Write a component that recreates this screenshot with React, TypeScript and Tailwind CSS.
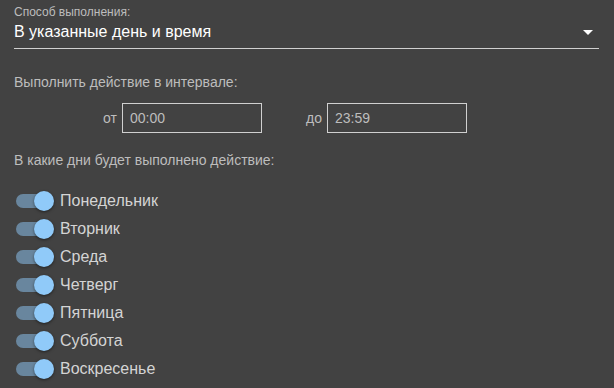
const days = ['Понедельник', 'Вторник', 'Среда', 'Четверг', 'Пятница', 'Суббота', 'Воскресенье'];

function Toggle() {
  return (
    <span className="relative flex h-5 w-[40px] shrink-0 items-center">
      <span className="ml-[2px] h-[14px] w-[34px] rounded-full bg-[#90caf9]/50" />
      <span className="absolute left-[20px] top-0 h-5 w-5 rounded-full bg-[#90caf9] shadow-[0_1px_3px_rgba(0,0,0,0.5)]" />
    </span>
  );
}

export default function App() {
  return (
    <main className="min-h-[388px] w-[614px] bg-[#424242] px-[14px] pt-[5px] font-['Liberation_Sans',Arial,sans-serif] text-[#e0e0e0]">
      <div className="flex w-[585px] flex-col">
        <p className="text-[12px] leading-[14px] text-[#bdbdbd]">Способ выполнения:</p>
        <div className="flex items-center justify-between border-b border-[#d0d0d0] pb-[6px] pt-[3px]">
          <span className="text-[16px] leading-[20px] text-white">В указанные день и время</span>
          <svg width="10" height="5" viewBox="0 0 10 5" className="mr-[6px]">
            <path d="M0 0h10L5 5z" fill="#ffffff" />
          </svg>
        </div>
      </div>

      <p className="mt-[25px] text-[14px] leading-[16px] text-[#bdbdbd]">Выполнить действие в интервале:</p>

      <div className="mt-[13px] flex items-center">
        <span className="ml-[89px] w-[19px] text-[14px] text-[#bdbdbd]">от</span>
        <div className="flex h-[30px] w-[140px] items-center border border-[#d0d0d0] px-[7px] text-[14px] text-[#bdbdbd]">00:00</div>
        <span className="ml-[44px] w-[21px] text-[14px] text-[#bdbdbd]">до</span>
        <div className="flex h-[30px] w-[140px] items-center border border-[#d0d0d0] px-[7px] text-[14px] text-[#bdbdbd]">23:59</div>
      </div>

      <p className="mt-[19px] text-[14px] leading-[16px] text-[#bdbdbd]">В какие дни будет выполнено действие:</p>

      <div className="mt-[23px] flex flex-col gap-[8px]">
        {days.map(d => (
          <label key={d} className="flex h-5 items-center gap-[6px]">
            <Toggle />
            <span className="text-[16px] leading-[18px] text-[#d4d4d4]">{d}</span>
          </label>
        ))}
      </div>
    </main>
  );
}
